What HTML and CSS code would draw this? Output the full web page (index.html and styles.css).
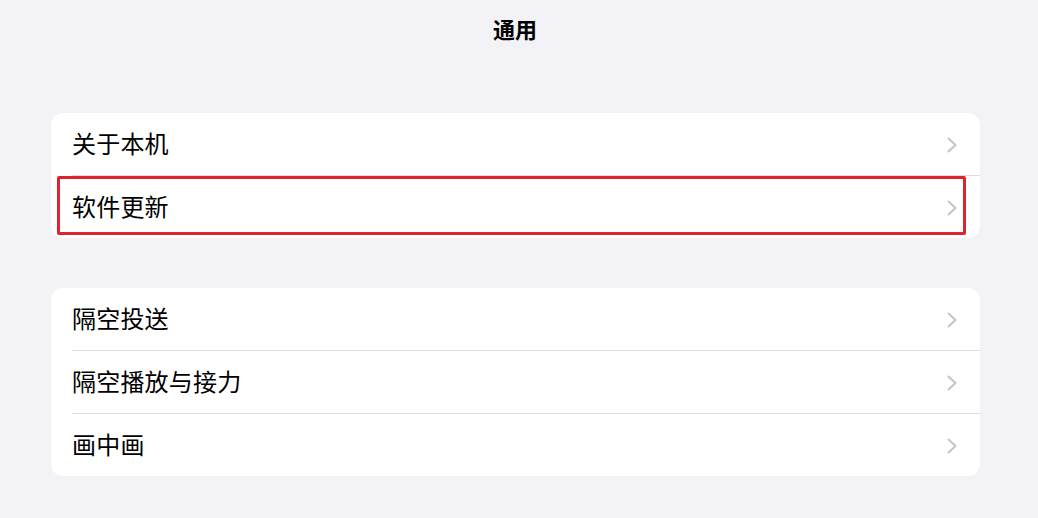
FILE: index.html
```html
<!DOCTYPE html>
<html lang="zh-CN">
<head>
<meta charset="utf-8">
<title>通用</title>
<link rel="stylesheet" href="styles.css">
</head>
<body>
<div class="page">
  <header class="nav"><h1 class="nav-title">通用</h1></header>
  <section class="group group-first">
    <div class="row">
      <div class="row-inner"><span class="label">关于本机</span><svg class="chev" viewBox="0 0 10 16" width="10" height="16"><path d="M1.5 1.5 L8.5 8 L1.5 14.5" fill="none" stroke="#c4c4c7" stroke-width="2" stroke-linecap="round" stroke-linejoin="round"/></svg></div>
    </div>
    <div class="row highlighted">
      <div class="row-inner last"><span class="label">软件更新</span><svg class="chev" viewBox="0 0 10 16" width="10" height="16"><path d="M1.5 1.5 L8.5 8 L1.5 14.5" fill="none" stroke="#c4c4c7" stroke-width="2" stroke-linecap="round" stroke-linejoin="round"/></svg></div>
      <div class="mark"></div>
    </div>
  </section>
  <section class="group group-second">
    <div class="row">
      <div class="row-inner"><span class="label">隔空投送</span><svg class="chev" viewBox="0 0 10 16" width="10" height="16"><path d="M1.5 1.5 L8.5 8 L1.5 14.5" fill="none" stroke="#c4c4c7" stroke-width="2" stroke-linecap="round" stroke-linejoin="round"/></svg></div>
    </div>
    <div class="row">
      <div class="row-inner"><span class="label">隔空播放与接力</span><svg class="chev" viewBox="0 0 10 16" width="10" height="16"><path d="M1.5 1.5 L8.5 8 L1.5 14.5" fill="none" stroke="#c4c4c7" stroke-width="2" stroke-linecap="round" stroke-linejoin="round"/></svg></div>
    </div>
    <div class="row">
      <div class="row-inner last"><span class="label">画中画</span><svg class="chev" viewBox="0 0 10 16" width="10" height="16"><path d="M1.5 1.5 L8.5 8 L1.5 14.5" fill="none" stroke="#c4c4c7" stroke-width="2" stroke-linecap="round" stroke-linejoin="round"/></svg></div>
    </div>
  </section>
</div>
</body>
</html>
```
FILE: styles.css
```css
html, body {
  margin: 0;
  padding: 0;
  background: #f2f2f7;
}
body {
  font-family: "Noto Sans CJK SC", "Noto Sans", sans-serif;
  color: #000;
}
.page {
  width: 1038px;
  height: 518px;
  overflow: hidden;
  display: flex;
  flex-direction: column;
}
.nav {
  display: flex;
  justify-content: center;
  padding-top: 13px;
  padding-right: 8px;
  height: 30px;
}
.nav-title {
  margin: 0;
  font-size: 22px;
  font-weight: 700;
  line-height: 30px;
}
.group {
  margin: 0 58px 0 51px;
  background: #fff;
  border-radius: 12px;
}
.group-first {
  margin-top: 70px;
}
.group-second {
  margin-top: 50px;
}
.row {
  position: relative;
  display: flex;
  padding-left: 21px;
}
.row-inner {
  flex: 1;
  display: flex;
  align-items: center;
  justify-content: space-between;
  height: 62px;
  border-bottom: 1px solid #dedee2;
  padding-right: 23px;
}
.row-inner.last {
  border-bottom: none;
}
.label {
  font-size: 24px;
  line-height: 30px;
  letter-spacing: 0.2px;
  margin-top: -2px;
}
.chev {
  display: block;
  margin-top: 1px;
}
.mark {
  position: absolute;
  left: 6px;
  right: 14px;
  top: 0;
  bottom: 3px;
  border: 3px solid #e0222e;
  border-radius: 2px;
  pointer-events: none;
}
```
